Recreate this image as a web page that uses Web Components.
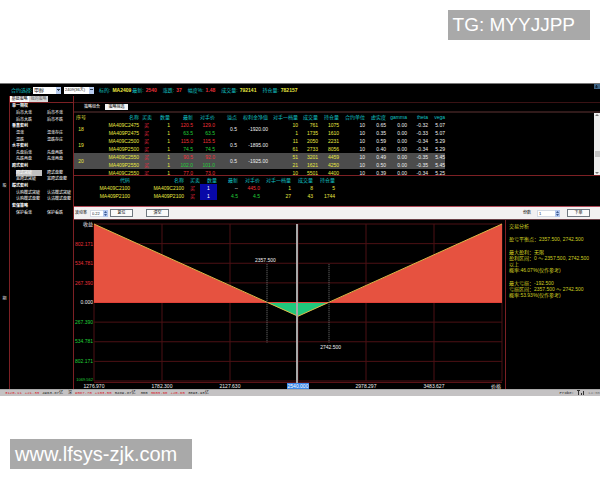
<!DOCTYPE html>
<html lang="zh-CN">
<head>
<meta charset="utf-8">
<title>期权策略</title>
<style>
    body {
        margin: 0;
        background: #fff;
        font-family: "Liberation Sans", "Noto Sans CJK SC", sans-serif;
        font-size: 5px;
        line-height: 6px;
    }
    .page {
        display: flex;
        flex-direction: column;
        padding: 10px;
        gap: 43px;
    }
    page-tag.top { align-self: flex-end; }
    page-tag.bottom { align-self: flex-start; --tag-size: 20px; }
    trade-app { margin: 0 -10px; }
</style>
</head>
<body>
<div class="page">
    <page-tag class="top">TG: MYYJJPP</page-tag>
    <trade-app>
        <quote-bar slot="quote"></quote-bar>
        <strategy-list slot="side"></strategy-list>
        <option-table slot="main"></option-table>
        <position-table slot="main"></position-table>
        <tool-bar slot="main"></tool-bar>
        <payoff-chart slot="chart"></payoff-chart>
        <trade-analysis slot="chart"></trade-analysis>
        <status-bar slot="status"></status-bar>
    </trade-app>
    <page-tag class="bottom"><a href="#">www.lfsys-zjk.com</a></page-tag>
</div>

<script>
class BaseElement extends HTMLElement {
    constructor() {
        super();
        this.attachShadow({ mode: 'open' });
        this.render();
    }
    render() {
        this.shadowRoot.innerHTML = `
            <style>
                :host, * { box-sizing: border-box; }
                button, input, select { font: inherit; margin: 0; border-radius: 0; }
            </style>
            ${this.getStyles()}
            ${this.getTemplate()}
        `;
    }
}

class PageTag extends BaseElement {
    getTemplate() {
        return `<slot></slot>`;
    }
    getStyles() {
        return `
            <style>
                :host {
                    display: block;
                    padding: 0 15px 0 5px;
                    background: #a9a9a9;
                    color: #fff;
                    font-family: "Liberation Sans", sans-serif;
                    font-size: var(--tag-size, 19px);
                    line-height: 30px;
                }
                ::slotted(a) { color: inherit; text-decoration: none; }
            </style>
        `;
    }
}

class TradeApp extends BaseElement {
    getTemplate() {
        return `
            <slot name="quote"></slot>
            <div class="work">
                <nav class="rail"><span>股</span><span>期</span></nav>
                <slot name="side"></slot>
                <main>
                    <div class="views">
                        <button>策略组合</button>
                        <button class="on">策略筛选</button>
                    </div>
                    <slot name="main"></slot>
                    <div class="chart"><slot name="chart"></slot></div>
                </main>
            </div>
            <slot name="status"></slot>
        `;
    }
    getStyles() {
        return `
            <style>
                :host { display: block; background: #000; color: #e4e4e4; border-top: 1px solid #777; }
                .work { display: flex; }
                .rail {
                    width: 10px;
                    display: flex;
                    flex-direction: column;
                    align-items: center;
                    padding-top: 87px;
                    gap: 107px;
                    border-right: 1px solid #7c2024;
                    font-size: 4px;
                }
                main { flex: 1; min-width: 0; padding-top: 6px; display: flex; flex-direction: column; }
                .views {
                    display: flex;
                    height: 11px;
                    padding: 1px 0 1px 5px;
                    border-top: 1px solid #3a1214;
                    border-bottom: 2px solid #301a1a;
                }
                button { width: 23px; padding: 0; border: 0; background: none; color: #fff; font-size: 4px; }
                button:first-child { width: 26px; }
                button.on { background: #f4f4f4; color: #000; }
                .chart { display: flex; height: 169px; }
            </style>
        `;
    }
}

class QuoteBar extends BaseElement {
    getTemplate() {
        return `
            <label for="kind">合约选择:</label>
            <select id="kind"><option>甲醇</option></select>
            <select id="month" aria-label="月份"><option>2409(36天)</option></select>
            <span class="item">标的:</span>
            <b class="name">MA2409</b>
            <span>最新:</span><b class="up">2540</b>
            <span>涨跌:</span><b class="up">37</b>
            <span>幅度%:</span><b class="up">1.48</b>
            <span>成交量:</span><b>792141</b>
            <span>持仓量:</span><b>782157</b>
            <svg viewBox="0 0 6 5" width="6" height="5"><rect width="6" height="5" fill="#3f6485"/><path d="M1 3h3M2.500 1v3" stroke="#16283a"/></svg>
        `;
    }
    getStyles() {
        return `
            <style>
                :host { display: flex; align-items: center; height: 12px; padding-left: 11px; color: #12c4c8; white-space: nowrap; }
                label { width: 22px; }
                select {
                    appearance: none;
                    width: 28px;
                    height: 7px;
                    margin-right: 3px;
                    padding: 0 0 0 1px;
                    border: 0;
                    color: #222;
                    background:
                        conic-gradient(from 315deg at 50% 75%, #345 90deg, transparent 0) right 1px center / 3px 2px no-repeat,
                        linear-gradient(#b9cdf0, #b9cdf0) right / 5px 100% no-repeat #fff;
                }
                #kind { font-size: 5px; }
                #month { width: 30px; margin-right: 5px; font-size: 4px; }
                span { margin-right: 2px; }
                b { color: #e8e840; margin-right: 6px; }
                b.up { color: #e83038; }
                b.name { margin-right: 1px; }
                svg { margin: 0 0 auto auto; }
            </style>
        `;
    }
}

class StrategyList extends BaseElement {
    getTemplate() {
        const groups = [
            ['单一期权', '后市大涨', '后市不涨', '后市大跌', '后市不跌'],
            ['垂直套利', '温涨', '温涨存庄', '温跌', '温跌存庄'],
            ['水平套利', '先盘后涨', '先盘再跌', '先跌再盘', '先涨再盘'],
            ['跨式套利', '跨式突破', '跨式盘整', '宽跨式突破', '宽跨式盘整'],
            ['蝶式套利', '认购蝶式突破', '认沽蝶式突破', '认购蝶式盘整', '认沽蝶式盘整'],
            ['套保策略', '保护看涨', '保护看跌']
        ];
        return `
            <div class="tabs"><button class="on">基础策略</button><button>我的策略</button></div>
            <div class="list">
                ${groups.map(([title, ...items]) => `
                    <b>${title}</b>
                    ${items.map(t => `<a href="#" ${t === '跨式突破' ? 'class="on"' : ''}>${t}</a>`).join('')}
                `).join('')}
            </div>
        `;
    }
    getStyles() {
        return `
            <style>
                :host { display: block; width: 64px; border-right: 1px solid #7c2024; font-size: 4px; }
                .tabs { display: flex; height: 6px; }
                button { width: 19px; padding: 0; border: 0; background: #d8d8d8; color: #666; line-height: 6px; }
                button.on { background: #fff; color: #000; }
                .list {
                    display: grid;
                    grid-template-columns: 31px 1fr;
                    grid-auto-rows: 1fr;
                    align-items: center;
                    height: 114px;
                    padding-left: 6px;
                    border-top: 1px solid #7c2024;
                }
                b { grid-column: 1 / -1; margin-left: -4px; color: #fff; }
                a { color: #fff; text-decoration: none; white-space: nowrap; }
                a.on { background: #c0c0c0; margin-right: 5px; }
            </style>
        `;
    }
}

const TABLE_STYLES = `
    table { table-layout: fixed; border-collapse: collapse; width: 0; white-space: nowrap; }
    th, td { padding: 0; height: 8px; text-align: right; font-weight: normal; line-height: 6px; overflow: visible; }
    th { color: #12c4c8; }
    td { color: #e8e840; }
    .w { color: #f0f0f0; }
    .r { color: #f03038; }
    .g { color: #20d038; }
    .buy { color: #f02840; padding-right: 3px; }
`;

const SPINNER = `
    <svg viewBox="0 0 5 7" width="5" height="7"><rect width="5" height="7" fill="#b4c8f0"/><path d="M1 3L2.500 1L4 3ZM1 4L2.500 6L4 4Z" fill="#3c5890"/></svg>
`;

const getCols = widths => `<colgroup>${widths.map(w => `<col style="width:${w}px">`).join('')}</colgroup>`;

class OptionTable extends BaseElement {
    getTemplate() {
        const heads = ['序号', '名称', '买卖', '数量', '最新', '对手价', '溢点', '权利金净值', '对手一档量', '成交量', '持仓量', '合约单位', '虚实度', 'gamma', 'theta', 'vega'];
        const pairs = [
            ['18', '0.5', '-1920.00',
                ['MA409C2475', 'r', '120.5', '129.0', '10', '761', '1075', '0.65', '-0.32', '5.07'],
                ['MA409P2475', 'g', '63.5', '63.5', '1', '1735', '1610', '0.35', '-0.33', '5.07']],
            ['19', '0.5', '-1895.00',
                ['MA409C2500', 'r', '115.0', '115.5', '11', '2050', '2231', '0.59', '-0.34', '5.29'],
                ['MA409P2500', 'g', '74.5', '74.5', '61', '2733', '8056', '0.40', '-0.34', '5.29']],
            ['20', '0.5', '-1925.00',
                ['MA409C2550', 'r', '90.5', '92.0', '51', '3201', '4459', '0.49', '-0.35', '5.45'],
                ['MA409P2550', 'g', '102.0', '101.0', '21', '1621', '4250', '0.50', '-0.35', '5.45']],
            ['', '', '',
                ['MA409C2550', 'r', '77.0', '73.0', '10', '5501', '4400', '0.39', '-0.34', '5.25']]
        ];
        const row = (r, no, slip, net, span) => `
            <tr>
                ${span ? `<td class="no" rowspan="${span}">${no}</td>` : ''}
                <td>${r[0]}</td><td class="buy">买</td><td>1</td>
                <td class="${r[1]}">${r[2]}</td><td class="${r[1]}">${r[3]}</td>
                ${span ? `<td class="w" rowspan="${span}">${slip}</td><td class="w" rowspan="${span}">${net}</td>` : ''}
                <td>${r[4]}</td><td>${r[5]}</td><td>${r[6]}</td>
                <td class="w">10</td><td class="w">${r[7]}</td><td class="w">0.00</td><td class="w">${r[8]}</td><td class="w">${r[9]}</td>
            </tr>`;
        return `
            <div class="view">
                <table>
                    ${getCols([14, 51, 13, 18, 23, 22, 22, 31, 30, 20, 21, 26, 21, 21, 21, 17])}
                    <thead><tr>${heads.map(h => `<th>${h}</th>`).join('')}</tr></thead>
                    ${pairs.map(([no, slip, net, ...rows]) => `
                        <tbody class="${no === '20' ? 'on' : ''}">
                            ${rows.map((r, i) => row(r, no, slip, net, i ? 0 : rows.length)).join('')}
                        </tbody>`).join('')}
                </table>
            </div>
            <div class="scroll">
                <svg viewBox="0 0 6 4" width="6" height="4"><path d="M1 3L3 1L5 3Z" fill="#777"/></svg>
                <span></span>
                <svg viewBox="0 0 6 4" width="6" height="4"><path d="M1 1L3 3L5 1Z" fill="#777"/></svg>
            </div>
        `;
    }
    getStyles() {
        return `
            <style>
                ${TABLE_STYLES}
                :host { display: flex; height: 63px; border-bottom: 1px solid #7c2024; }
                .view { flex: 1; overflow: hidden; }
                th:first-child { color: #e8e840; text-align: center; }
                .no { text-align: center; }
                .on { background: #4c4c4c; }
                .scroll {
                    width: 6px;
                    display: flex;
                    flex-direction: column;
                    justify-content: space-between;
                    align-items: center;
                    background: #eee;
                }
                .scroll span { width: 5px; height: 6px; margin-top: 20px; background: #c4c4c4; }
            </style>
        `;
    }
}

class PositionTable extends BaseElement {
    getTemplate() {
        const heads = ['代码', '名称', '买卖', '数量', '最新', '对手价', '对手一档量', '成交量', '持仓量'];
        return `
            <table>
                ${getCols([56, 54, 16, 17, 21, 22, 31, 22, 22])}
                <tr>${heads.map(h => `<th>${h}</th>`).join('')}</tr>
                <tr><td>MA409C2100</td><td>MA409C2100</td><td class="buy">买</td><td class="qty">1</td><td class="w">--</td><td class="r">445.0</td><td>1</td><td>8</td><td>5</td></tr>
                <tr><td>MA409P2100</td><td>MA409P2100</td><td class="buy">买</td><td class="qty">1</td><td class="g">4.5</td><td class="g">4.5</td><td>27</td><td>43</td><td>1744</td></tr>
            </table>
        `;
    }
    getStyles() {
        return `
            <style>
                ${TABLE_STYLES}
                :host { display: block; height: 30px; }
                .buy { padding-right: 5px; }
                .qty { background: #0808a8; color: #fff; text-align: center; }
            </style>
        `;
    }
}

class ToolBar extends BaseElement {
    getTemplate() {
        return `
            <label for="vol">波动率</label>
            <input id="vol" value="0.22">${SPINNER}
            <button>复位</button>
            <button class="clear">清空</button>
            <label for="lots" class="lots">份数</label>
            <input id="lots" value="1">${SPINNER}
            <button class="order">下单</button>
        `;
    }
    getStyles() {
        return `
            <style>
                :host {
                    display: flex;
                    align-items: center;
                    height: 14px;
                    padding: 0 10px 0 1px;
                    background: #f2f0f1;
                    color: #000;
                    border-top: 1px solid #b04a58;
                    border-bottom: 1px solid #6a4048;
                }
                label { width: 15px; font-size: 4px; }
                input { width: 13px; height: 7px; padding: 0 1px; border: 1px solid #d4dae4; border-right: 0; background: #fff; color: #223; font-size: 4px; }
                svg { margin-right: 2px; }
                button { width: 23px; height: 8px; padding: 0; border: 1px solid #707880; background: #fafafa; color: #000; font-size: 4px; line-height: 6px; }
                .clear { margin-left: 13px; }
                .lots { margin-left: auto; width: 14px; }
                #lots { width: 18px; }
                .order { margin-left: 5px; }
            </style>
        `;
    }
}

class PayoffChart extends BaseElement {
    getTemplate() {
        const ys = [['收益', 'w'], ['802.171', 'r'], ['534.781', 'r'], ['267.390', 'r'], ['0.000', 'w'], ['267.390', 'g'], ['534.781', 'g'], ['802.171', 'g'], ['1069.562', 'g']];
        const xs = ['1276.970', '1782.300', '2127.630', '2540.000', '2978.297', '3483.627', '价格'];
        // plot units: 408 wide (6 steps of 68), 160 high (8 steps of 20), zero at 80
        const grid = xs.map((x, i) => `M${i * 68} 0V160`).join('') + ys.map((y, i) => `M0 ${i * 20}H408`).join('');
        return `
            <div class="ys">${ys.map(([t, c]) => `<span class="${c}">${t}</span>`).join('')}</div>
            <div class="plot">
                <svg viewBox="0 0 408 160" preserveAspectRatio="none">
                    <path d="${grid}" stroke="#4c1014"/>
                    <path d="M0 0L173 80H0ZM408 0L235 80H408Z" fill="#e65240"/>
                    <path d="M173 80L204 94L235 80Z" fill="#20c87c"/>
                    <path d="M0 80H408" stroke="#e04038"/>
                    <path d="M0 0L204 94L408 0" stroke="#e0b848"/>
                    <path d="M173 41V121M235 41V121" stroke="#777" stroke-dasharray="1 1"/>
                    <path d="M203 0V168" stroke="#a8a8a8" stroke-width="2"/>
                </svg>
                <span class="mark low">2357.500</span>
                <span class="mark high">2742.500</span>
            </div>
            <div class="xs">${xs.map((t, i) => `<span class="${i === 3 ? 'now' : ''}">${t}</span>`).join('')}</div>
        `;
    }
    getStyles() {
        return `
            <style>
                :host {
                    flex: 1;
                    display: grid;
                    grid-template: minmax(0, 1fr) 6px / 20px 1fr;
                    padding: 4px 3px 0 0;
                    border-right: 1px solid #7c2024;
                    color: #f0f0f0;
                }
                .ys { display: flex; flex-direction: column; justify-content: space-between; align-items: flex-end; margin: -3px 1px 0 0; }
                .ys span:last-child { font-size: 4px; }
                .r { color: #e83038; }
                .g { color: #20d038; }
                .plot { position: relative; min-height: 0; border-bottom: 1px solid #5a1216; padding-bottom: 1px; }
                svg { display: block; width: 100%; height: 100%; overflow: visible; fill: none; }
                path { vector-effect: non-scaling-stroke; }
                .mark { position: absolute; transform: translate(-50%, -50%); }
                .low { left: 42%; top: 23%; }
                .high { left: 58%; top: 78%; }
                .xs { grid-column: 2; display: flex; justify-content: space-between; margin: 0 -11px; z-index: 1; }
                .xs span { width: 22px; text-align: center; white-space: nowrap; }
                .xs .now { background: #3c88e8; color: #fff; }
                .xs span:last-child { text-align: left; }
            </style>
        `;
    }
}

class TradeAnalysis extends BaseElement {
    getTemplate() {
        return `
            <p>交易分析</p>
            <p>盈亏平衡点：2357.500, 2742.500</p>
            <p>最大盈利：无限<br>盈利区间：0 ～ 2357.500, 2742.500 以上<br>概率:46.07%(仅作参考)</p>
            <p>最大亏损：-192.500<br>亏损区间：2357.500 ～ 2742.500<br>概率:53.93%(仅作参考)</p>
        `;
    }
    getStyles() {
        return `
            <style>
                :host { display: block; width: 94px; padding: 3px 6px 0 3px; color: #d0d020; }
                p { margin: 0 0 7px; line-height: 6px; }
            </style>
        `;
    }
}

class StatusBar extends BaseElement {
    getTemplate() {
        return `
            <div class="index"><b>3120.11</b><b>+21.33</b><span>4963.87亿</span></div>
            <div class="index">深<b>9087.70</b><b>+103.50</b><span>5489.87亿</span></div>
            <div class="index">300<b>3603.60</b><b>+20.65</b><span>3093.93亿</span></div>
            <div class="probe">Probe:</div>
            <svg viewBox="0 0 8 6" width="8" height="6"><path d="M0 0.500h3M1.500 0v5M4.500 3v2M6.500 1v4" stroke="#333" fill="none"/></svg>
            <time>14:55</time>
        `;
    }
    getStyles() {
        return `
            <style>
                :host {
                    display: flex;
                    align-items: center;
                    gap: 5px;
                    height: 7px;
                    padding-left: 5px;
                    background: #c4c2c3;
                    color: #222;
                    white-space: nowrap;
                    border-top: 1px solid #aaa;
                    font-family: "Liberation Mono", "Noto Sans CJK SC", monospace;
                    font-size: 4px;
                }
                .index { display: flex; gap: 3px; }
                b { font-weight: normal; color: #d81828; }
                .probe { margin-left: auto; }
                svg { margin: 0 -2px; }
                time { color: #777; }
            </style>
        `;
    }
}

customElements.define('page-tag', PageTag);
customElements.define('trade-app', TradeApp);
customElements.define('quote-bar', QuoteBar);
customElements.define('strategy-list', StrategyList);
customElements.define('option-table', OptionTable);
customElements.define('position-table', PositionTable);
customElements.define('tool-bar', ToolBar);
customElements.define('payoff-chart', PayoffChart);
customElements.define('trade-analysis', TradeAnalysis);
customElements.define('status-bar', StatusBar);
</script>
</body>
</html>
